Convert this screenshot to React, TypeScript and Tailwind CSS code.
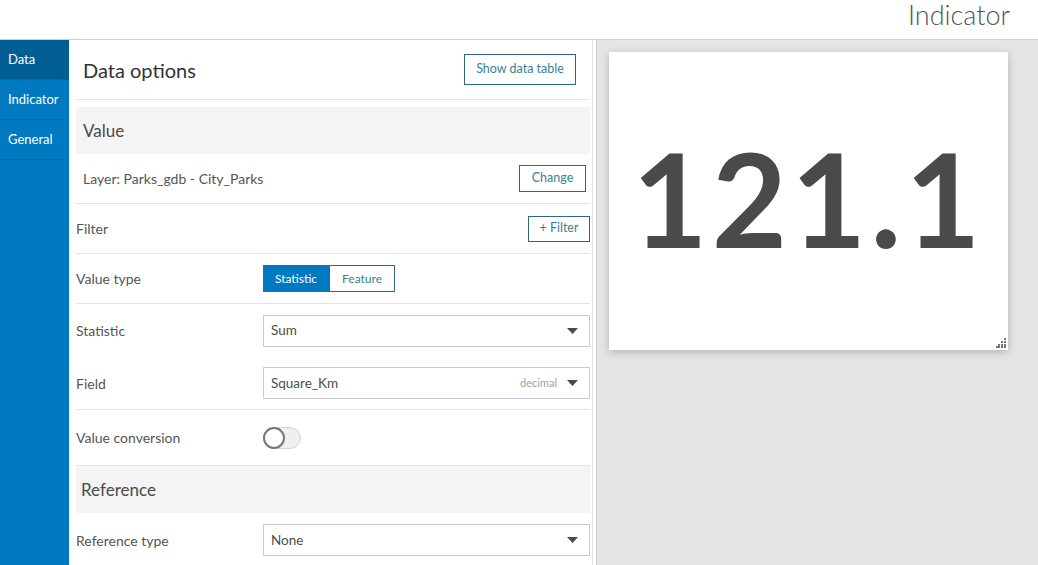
import { useState } from 'react';

const font = { fontFamily: 'Lato, "Open Sans", sans-serif' };

function Caret() {
  return (
    <svg width="11" height="6" viewBox="0 0 11 6" className="shrink-0">
      <path d="M0 0h11L5.5 6z" fill="#4a4a4a" />
    </svg>
  );
}

function Select({ value, hint }: { value: string; hint?: string }) {
  return (
    <div className="flex h-[32px] flex-1 items-center border border-[#cacaca] bg-white pl-[7px] pr-[11px]">
      <span className="flex-1 text-[13.5px] text-[#4c4c4c]">{value}</span>
      {hint && <span className="mr-[10px] text-[11px] text-[#a0a0a0]">{hint}</span>}
      <Caret />
    </div>
  );
}

function Row({
  label,
  children,
  border = true,
  h = 'h-[50px]',
}: {
  label: string;
  children?: React.ReactNode;
  border?: boolean;
  h?: string;
}) {
  return (
    <div className={`flex items-center ${h} ${border ? 'border-b border-[#e4e4e4]' : ''}`}>
      <div className="w-[187px] shrink-0 text-[14px] text-[#555]">{label}</div>
      <div className="flex flex-1 items-center">{children}</div>
    </div>
  );
}

function OutlineButton({ children, className = '' }: { children: React.ReactNode; className?: string }) {
  return (
    <button className={`border border-[#2b6a80] bg-white text-[12.5px] text-[#3a7f96] ${className}`}>
      {children}
    </button>
  );
}

export default function App() {
  const [tab] = useState('Data');
  const tabs = ['Data', 'Indicator', 'General'];

  return (
    <div className="flex h-[565px] w-[1038px] flex-col overflow-hidden bg-white" style={font}>
      {/* Top title bar */}
      <div className="flex h-[40px] shrink-0 items-start justify-end border-b border-[#cfcfcf] pr-[28px]">
        <span className="text-[27px] font-light leading-[30px] text-[#555]">Indicator</span>
      </div>

      <div className="flex min-h-0 flex-1">
        {/* Side tabs */}
        <div className="w-[69px] shrink-0 bg-[#0079c1]">
          {tabs.map((t) => (
            <div
              key={t}
              className={`flex h-[40px] items-center border-b border-[#006bab] pl-[8px] text-[13px] text-white ${
                t === tab ? 'bg-[#005e95]' : ''
              }`}
            >
              {t}
            </div>
          ))}
        </div>

        {/* Settings panel */}
        <div className="flex w-[528px] shrink-0 border-r border-[#cfcfcf] pr-[3px]">
          <div className="flex-1 border-r border-[#e2e2e2] pl-[7px] pr-[2px]">
            <div className="flex h-[60px] items-center justify-between border-b border-[#e6e6e6] pl-[7px] pr-[14px]">
              <span className="text-[20px] text-[#323232]">Data options</span>
              <OutlineButton className="h-[31px] w-[112px]">Show data table</OutlineButton>
            </div>

            <div className="mt-[7px] flex h-[47px] items-center bg-[#f4f4f4] pl-[7px] text-[17px] text-[#4a4a4a]">
              Value
            </div>

            <div className="flex h-[50px] items-center justify-between border-b border-[#e4e4e4] pl-[7px] pr-[4px]">
              <span className="text-[14px] text-[#555]">Layer: Parks_gdb - City_Parks</span>
              <OutlineButton className="h-[27px] w-[67px]">Change</OutlineButton>
            </div>

            <div className="flex h-[50px] items-center justify-between border-b border-[#e4e4e4]">
              <span className="text-[14px] text-[#555]">Filter</span>
              <OutlineButton className="h-[26px] w-[62px]">+ Filter</OutlineButton>
            </div>

            <Row label="Value type">
              <button className="h-[27px] w-[66px] bg-[#0079c1] text-[12px] text-white">Statistic</button>
              <button className="h-[27px] w-[66px] border border-[#2b6a80] bg-white text-[12px] text-[#3a7f96]">
                Feature
              </button>
            </Row>

            <Row label="Statistic" border={false} h="h-[53px]">
              <Select value="Sum" />
            </Row>

            <Row label="Field" h="h-[53px]">
              <Select value="Square_Km" hint="decimal" />
            </Row>

            <Row label="Value conversion" h="h-[56px]">
              <div className="relative h-[22px] w-[38px] rounded-full border border-[#d6d6d6] bg-[#efefef]">
                <div className="absolute -left-px -top-px h-[22px] w-[22px] rounded-full border-2 border-[#777] bg-white" />
              </div>
            </Row>

            <div className="flex h-[47px] items-center bg-[#f4f4f4] pl-[5px] text-[17px] text-[#4a4a4a]">
              Reference
            </div>

            <Row label="Reference type" border={false} h="h-[54px]">
              <Select value="None" />
            </Row>
          </div>
        </div>

        {/* Preview */}
        <div className="flex-1 bg-[#e5e5e5] pl-[12px] pr-[30px] pt-[12px]">
          <div className="relative flex h-[298px] items-center justify-center bg-white shadow-[0_2px_8px_rgba(0,0,0,0.22)]">
            <span className="-mt-[6px] text-[130px] font-bold leading-none tracking-[4px] text-[#4a4a4a]">
              121.1
            </span>
            <svg className="absolute bottom-[2px] right-[2px]" width="10" height="10" viewBox="0 0 10 10">
              {[
                [8, 0],
                [8, 3],
                [5, 3],
                [8, 6],
                [5, 6],
                [2, 6],
                [8, 8],
                [5, 8],
                [2, 8],
                [0, 8],
              ].map(([x, y], i) => (
                <rect key={i} x={x} y={y} width="2" height="2" fill="#777" />
              ))}
            </svg>
          </div>
        </div>
      </div>
    </div>
  );
}
